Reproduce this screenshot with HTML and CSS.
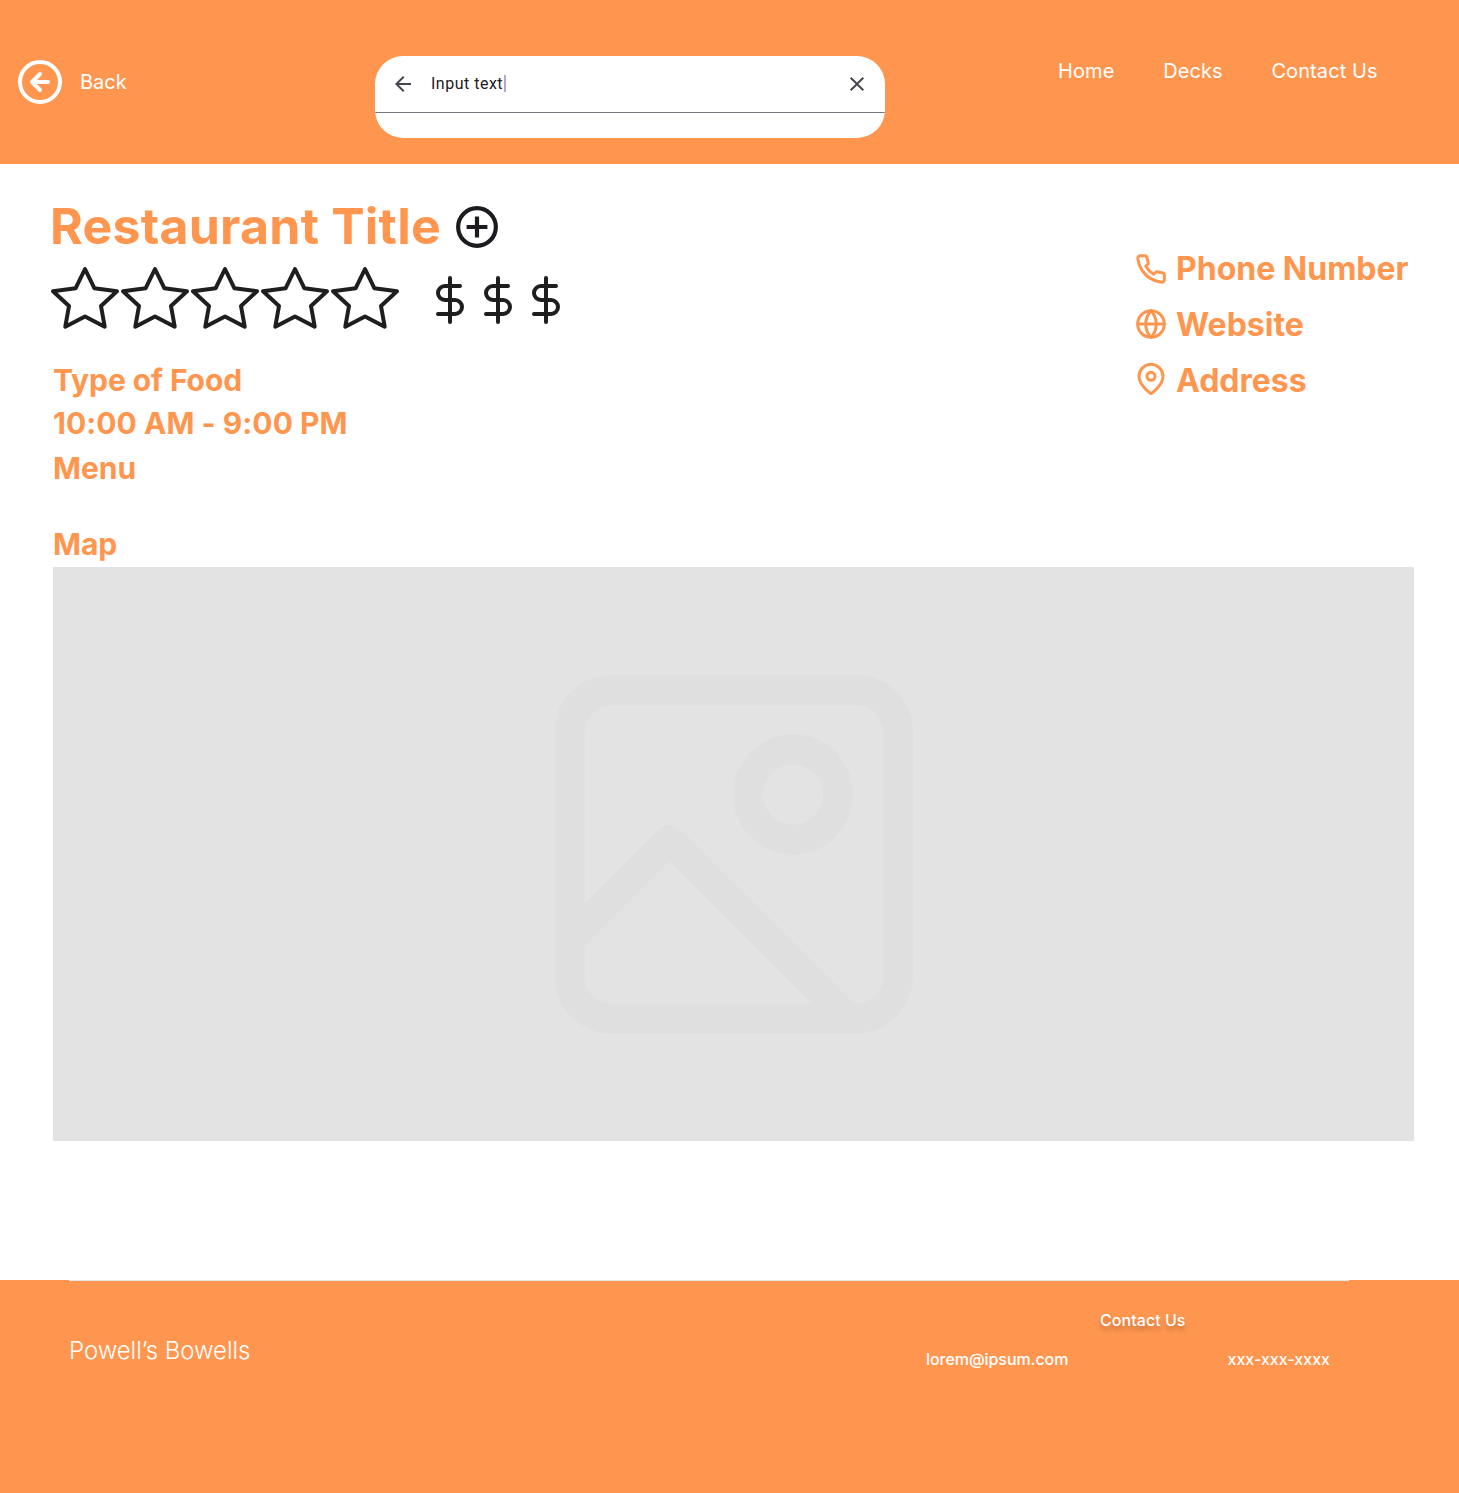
FILE: index.html
```html
<!DOCTYPE html>
<html lang="en">
<head>
<meta charset="utf-8">
<title>Restaurant</title>
<link rel="stylesheet" href="styles.css">
</head>
<body>
<header class="header">
  <a class="back">
    <svg width="48" height="48" viewBox="0 0 24 24" fill="none" stroke="currentColor" stroke-width="2" stroke-linecap="round" stroke-linejoin="round"><circle cx="12" cy="12" r="10"/><path d="M12 8l-4 4 4 4M16 12H8"/></svg>
    <span>Back</span>
  </a>
  <div class="search">
    <div class="search-row">
      <svg width="24" height="24" viewBox="0 0 24 24" fill="currentColor"><path d="M7.825 13l5.6 5.6L12 20l-8-8 8-8 1.425 1.4-5.6 5.6H20v2H7.825z"/></svg>
      <span class="search-text">Input text</span><span class="caret"></span>
      <svg class="clear" width="24" height="24" viewBox="0 0 24 24" fill="currentColor"><path d="M6.4 19L5 17.6l5.6-5.6L5 6.4 6.4 5l5.6 5.6L17.6 5 19 6.4 13.4 12l5.6 5.6-1.4 1.4-5.6-5.6L6.4 19z"/></svg>
    </div>
  </div>
  <nav class="nav"><a>Home</a><a>Decks</a><a>Contact Us</a></nav>
</header>
<main class="main">
  <div class="top">
    <section class="info">
      <div class="title-row">
        <h1>Restaurant Title</h1>
        <svg width="50" height="50" viewBox="0 0 24 24" fill="none" stroke="#1d1b20" stroke-width="2"><circle cx="12" cy="12" r="9.05"/><path d="M12 7v10M7 12h10"/></svg>
      </div>
      <div class="ratings">
        <svg width="350" height="70" viewBox="0 0 350 70" fill="none" stroke="#1e1e1e" stroke-width="4" stroke-linejoin="round">
          <defs><path id="star" d="M35 4L44.3 23.2 67 26.2 51 41 54.7 61.7 35 51.4 15.3 61.7 19 41 3 26.2 25.7 23.2Z"/></defs>
          <use href="#star"/><use href="#star" x="70"/><use href="#star" x="140"/><use href="#star" x="210"/><use href="#star" x="280"/>
        </svg>
        <svg class="price" width="144" height="48" viewBox="0 0 72 24" fill="none" stroke="#1e1e1e" stroke-width="2" stroke-linecap="round" stroke-linejoin="round">
          <defs><path id="dollar" d="M12 1v22M17 5H9.5a3.5 3.5 0 0 0 0 7h5a3.5 3.5 0 0 1 0 7H6"/></defs>
          <use href="#dollar"/><use href="#dollar" x="24"/><use href="#dollar" x="48"/>
        </svg>
      </div>
      <p class="detail food">Type of Food</p>
      <p class="detail hours">10:00 AM - 9:00 PM</p>
      <p class="detail">Menu</p>
    </section>
    <ul class="contact">
      <li><svg width="32" height="32" viewBox="0 0 24 24"><path d="M22 16.92v3a2 2 0 0 1-2.18 2 19.79 19.79 0 0 1-8.63-3.07 19.5 19.5 0 0 1-6-6 19.79 19.79 0 0 1-3.07-8.67A2 2 0 0 1 4.11 2h3a2 2 0 0 1 2 1.72 12.84 12.84 0 0 0 .7 2.81 2 2 0 0 1-.45 2.11L8.09 9.91a16 16 0 0 0 6 6l1.27-1.27a2 2 0 0 1 2.11-.45 12.84 12.84 0 0 0 2.81.7A2 2 0 0 1 22 16.92z"/></svg>Phone Number</li>
      <li><svg class="globe" width="32" height="32" viewBox="0 0 24 24"><circle cx="12" cy="12" r="10"/><path d="M2 12h20M12 2a15.3 15.3 0 0 1 4 10 15.3 15.3 0 0 1-4 10 15.3 15.3 0 0 1-4-10 15.3 15.3 0 0 1 4-10z"/></svg>Website</li>
      <li><svg class="pin" width="32" height="32" viewBox="0 0 24 24"><path d="M21 10c0 7-9 13-9 13s-9-6-9-13a9 9 0 0 1 18 0z"/><circle cx="12" cy="10" r="3"/></svg>Address</li>
    </ul>
  </div>
  <h2 class="detail map-title">Map</h2>
  <div class="map">
    <svg width="360" height="360" viewBox="0 0 360 360" fill="none" stroke="#dfdfdf" stroke-width="30" stroke-linejoin="round"><rect x="15.5" y="16" width="328.5" height="328.5" rx="42"/><circle cx="239" cy="120.5" r="45"/><path d="M15.5 266L115.5 166 294 344.5"/></svg>
  </div>
</main>
<footer class="footer">
  <div class="footer-inner">
    <div class="brand">Powell’s Bowells</div>
    <div class="footer-contact">
      <div class="footer-heading">Contact Us</div>
      <div class="footer-links"><span class="email">lorem@ipsum.com</span><span>xxx-xxx-xxxx</span></div>
    </div>
  </div>
</footer>
</body>
</html>
```
FILE: styles.css
```css
* { box-sizing: border-box; }
body { margin: 0; background: #fff; font-family: Inter, sans-serif; color: #ff964f; }
svg { display: block; flex: none; }
h1, h2, p, ul { margin: 0; padding: 0; }
.header { height: 164px; background: #ff964f; color: #fff; display: flex; align-items: flex-start; padding-left: 16px; font-size: 20px; line-height: 24px; }
.back { display: flex; align-items: center; gap: 16px; margin-top: 58px; width: 359px; }
.search { width: 510px; height: 82px; margin-top: 56px; background: #fff; border-radius: 28px; overflow: hidden; color: #49454f; }
.search-row { display: flex; align-items: center; height: 57px; padding: 0 16px 1px; border-bottom: 1px solid #79747e; }
.search-text { margin-left: 16px; font: 16px/24px Roboto, sans-serif; letter-spacing: .5px; color: #1d1b20; }
.caret { width: 2px; height: 17px; background: #b3a7d1; margin-left: 1px; }
.clear { margin-left: auto; }
.nav { display: flex; gap: 48.7px; margin: 59px 0 0 173px; letter-spacing: .1px; white-space: nowrap; }
.main { height: 1116px; padding: 33px 45px 0 50px; }
.top { display: flex; justify-content: space-between; height: 325px; }
.title-row { display: flex; align-items: center; gap: 11px; height: 60px; }
h1 { font-size: 50px; line-height: 58px; padding-bottom: 2px; font-weight: 700; letter-spacing: .23px; white-space: nowrap; }
.ratings { display: flex; margin-top: 8px; }
.price { margin: 11px 0 0 26px; }
.detail { font-size: 30px; line-height: 36px; font-weight: 700; padding-left: 3px; }
.food { margin-top: 27px; letter-spacing: -.08px; }
.hours { margin: 7px 0 9px; letter-spacing: .04px; }
.contact { list-style: none; width: 279px; margin-top: 52px; font-size: 32px; font-weight: 700; line-height: 40px; white-space: nowrap; }
.contact li { display: flex; align-items: center; gap: 9px; height: 40px; margin-bottom: 16px; }
.contact svg { fill: none; stroke: #ff964f; stroke-width: 2.25; stroke-linecap: round; stroke-linejoin: round; }
.contact .globe { margin-bottom: 2px; }
.contact .pin { margin-bottom: 4px; }
.map-title { margin-top: 4px; }
.map { width: 1361px; height: 574px; margin: 5px 0 0 3px; background: #e3e3e3; display: flex; justify-content: center; align-items: center; }
.footer { height: 213px; background: #ff964f; color: #fff; padding: 0 110px 0 69px; }
.footer-inner { display: flex; justify-content: space-between; border-top: 1px solid #e6e6e6; }
.brand { font-size: 24px; line-height: 30px; font-weight: 300; letter-spacing: -.04px; margin-top: 55px; }
.footer-contact { width: 423px; margin-top: 29px; font-size: 16px; line-height: 20px; font-weight: 500; }
.footer-heading { padding-left: 174px; letter-spacing: .05px; text-shadow: 0 4px 4px rgba(0,0,0,.25); }
.footer-links { display: flex; justify-content: space-between; margin-top: 19px; padding-right: 19px; }
.email { letter-spacing: -.06px; }
```
